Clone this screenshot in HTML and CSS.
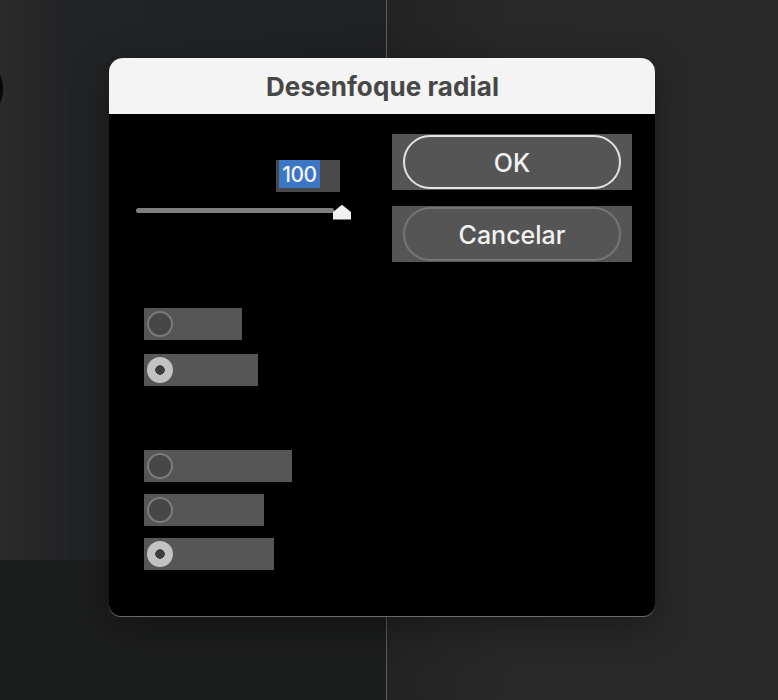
FILE: index.html
```html
<!DOCTYPE html>
<html lang="es">
<head>
<meta charset="utf-8">
<title>Desenfoque radial</title>
<link rel="stylesheet" href="styles.css">
</head>
<body>
<div class="desk">
  <div class="pane-left">
    <div class="pane-left-top"></div>
    <div class="pane-left-bottom"></div>
  </div>
  <div class="divider"></div>
  <div class="pane-right"></div>
  <div class="blob"></div>

  <div class="dialog">
    <div class="titlebar">Desenfoque radial</div>
    <div class="body">
      <div class="controls">
        <div class="field"><span class="sel">100</span></div>
        <div class="slider">
          <div class="track"></div>
          <svg class="thumb" width="20" height="16" viewBox="0 0 20 16"><path d="M1 15.5 V8 L10 0.8 L19 8 V15.5 Z" fill="#f2f2f2"/></svg>
        </div>
        <div class="group g1">
          <div class="radio w98"><span class="dot"></span></div>
          <div class="radio w114"><span class="dot on"></span></div>
        </div>
        <div class="group g2">
          <div class="radio w148"><span class="dot"></span></div>
          <div class="radio w120"><span class="dot"></span></div>
          <div class="radio w130"><span class="dot on"></span></div>
        </div>
      </div>
      <div class="buttons">
        <div class="btnbox"><div class="pill ok">OK</div></div>
        <div class="btnbox"><div class="pill cancel">Cancelar</div></div>
      </div>
    </div>
  </div>
</div>
</body>
</html>
```
FILE: styles.css
```css
html, body {
  margin: 0;
  padding: 0;
}
body {
  width: 778px;
  height: 700px;
  overflow: hidden;
  font-family: Inter, "Liberation Sans", sans-serif;
}
.desk {
  position: relative;
  width: 778px;
  height: 700px;
  display: grid;
  grid-template-columns: 386px 1px 1fr;
}
.pane-left {
  display: flex;
  flex-direction: column;
}
.pane-left-top {
  height: 560px;
  background: linear-gradient(to right, #2a2a2a 0px, #222325 70px, #202124 100%);
}
.pane-left-bottom {
  flex: 1;
  background: #1c1d1d;
}
.divider {
  background: #5c5c5c;
}
.pane-right {
  background: linear-gradient(to right, #232323, #282828 120px, #292929 100%);
}
.blob {
  position: absolute;
  left: -19px;
  top: 68px;
  width: 22px;
  height: 42px;
  border-radius: 50%;
  background: #080808;
  filter: blur(0.6px);
}
.dialog {
  position: absolute;
  left: 109px;
  top: 58px;
  width: 546px;
  height: 558px;
  border-radius: 14px 14px 12px 12px;
  overflow: hidden;
  background: #000;
  box-shadow: 0 1px 0 #6c6c6c, 0 10px 36px rgba(0, 0, 0, 0.35);
}
.titlebar {
  height: 56px;
  background: #f4f4f4;
  color: #474747;
  font-family: Inter, "Liberation Sans", sans-serif;
  font-weight: 700;
  font-size: 26px;
  letter-spacing: 0.1px;
  display: flex;
  align-items: center;
  justify-content: center;
  padding-left: 1px;
  padding-top: 1px;
  box-sizing: border-box;
}
.body {
  display: flex;
  align-items: flex-start;
  padding-left: 27px;
  gap: 40px;
}
.controls {
  width: 216px;
  padding-top: 46px;
  display: flex;
  flex-direction: column;
}
.field {
  margin-left: 140px;
  width: 64px;
  height: 32px;
  background: #4a4a4a;
  display: flex;
  align-items: flex-start;
}
.sel {
  margin-left: 3px;
  width: 41px;
  height: 28px;
  background: #3a76c5;
  color: #f4f4f4;
  font-size: 21px;
  font-weight: 500;
  line-height: 30px;
  letter-spacing: -0.5px;
  text-align: center;
}
.slider {
  margin-top: 12px;
  height: 16px;
  position: relative;
  display: flex;
  align-items: center;
}
.track {
  width: 198px;
  height: 5px;
  border-radius: 3px;
  background: #7f7f7f;
  margin-top: -3px;
}
.thumb {
  position: absolute;
  left: 196px;
  top: 0;
}
.group {
  display: flex;
  flex-direction: column;
  margin-left: 8px;
}
.g1 {
  margin-top: 88px;
  gap: 14px;
}
.g2 {
  margin-top: 64px;
  gap: 12px;
}
.radio {
  height: 32px;
  background: #565656;
  display: flex;
  align-items: center;
  padding-left: 3px;
  box-sizing: border-box;
}
.w98 { width: 98px; }
.w114 { width: 114px; }
.w148 { width: 148px; }
.w120 { width: 120px; }
.w130 { width: 130px; }
.dot {
  width: 26px;
  height: 26px;
  box-sizing: border-box;
  border-radius: 50%;
  background: #474747;
  border: 2px solid #7c7c7c;
}
.dot.on {
  border: none;
  background: radial-gradient(circle, #3c3c3c 0 4.5px, #c2c2c2 5px);
}
.buttons {
  padding-top: 20px;
  display: flex;
  flex-direction: column;
  gap: 16px;
}
.btnbox {
  width: 240px;
  height: 56px;
  background: #555555;
  display: flex;
  align-items: center;
  padding: 0 11px;
  box-sizing: border-box;
}
.pill {
  width: 218px;
  height: 54px;
  box-sizing: border-box;
  border-radius: 27px;
  display: flex;
  align-items: center;
  justify-content: center;
  color: #f2f2f2;
  font-size: 25px;
  font-weight: 500;
  padding-top: 2px;
}
.pill.ok {
  border: 2px solid #e4e4e4;
}
.pill.cancel {
  border: 2px solid #757575;
}
```
